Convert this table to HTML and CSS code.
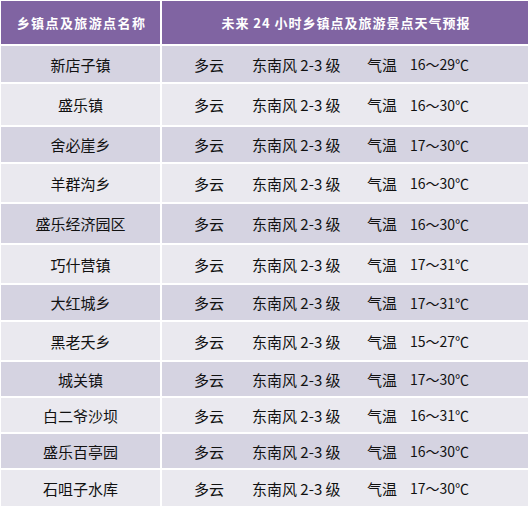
FILE: index.html
```html
<!DOCTYPE html>
<html lang="zh">
<head>
<meta charset="utf-8">
<link rel="stylesheet" href="styles.css">
</head>
<body>
<div class="table">
  <div class="row head">
    <div class="c1">乡镇点及旅游点名称</div>
    <div class="c2">未来 24 小时乡镇点及旅游景点天气预报</div>
  </div>
  <div class="row"><div class="c1">新店子镇</div><div class="c2 data"><span>多云</span><span>东南风 2-3 级</span><span>气温</span><span>16～29℃</span></div></div>
  <div class="row"><div class="c1">盛乐镇</div><div class="c2 data"><span>多云</span><span>东南风 2-3 级</span><span>气温</span><span>16～30℃</span></div></div>
  <div class="row"><div class="c1">舍必崖乡</div><div class="c2 data"><span>多云</span><span>东南风 2-3 级</span><span>气温</span><span>17～30℃</span></div></div>
  <div class="row"><div class="c1">羊群沟乡</div><div class="c2 data"><span>多云</span><span>东南风 2-3 级</span><span>气温</span><span>16～30℃</span></div></div>
  <div class="row"><div class="c1">盛乐经济园区</div><div class="c2 data"><span>多云</span><span>东南风 2-3 级</span><span>气温</span><span>16～30℃</span></div></div>
  <div class="row"><div class="c1">巧什营镇</div><div class="c2 data"><span>多云</span><span>东南风 2-3 级</span><span>气温</span><span>17～31℃</span></div></div>
  <div class="row"><div class="c1">大红城乡</div><div class="c2 data"><span>多云</span><span>东南风 2-3 级</span><span>气温</span><span>17～31℃</span></div></div>
  <div class="row"><div class="c1">黑老夭乡</div><div class="c2 data"><span>多云</span><span>东南风 2-3 级</span><span>气温</span><span>15～27℃</span></div></div>
  <div class="row"><div class="c1">城关镇</div><div class="c2 data"><span>多云</span><span>东南风 2-3 级</span><span>气温</span><span>17～30℃</span></div></div>
  <div class="row"><div class="c1">白二爷沙坝</div><div class="c2 data"><span>多云</span><span>东南风 2-3 级</span><span>气温</span><span>16～31℃</span></div></div>
  <div class="row"><div class="c1">盛乐百亭园</div><div class="c2 data"><span>多云</span><span>东南风 2-3 级</span><span>气温</span><span>16～30℃</span></div></div>
  <div class="row"><div class="c1">石咀子水库</div><div class="c2 data"><span>多云</span><span>东南风 2-3 级</span><span>气温</span><span>17～30℃</span></div></div>
</div>
</body>
</html>
```

FILE: styles.css
```css
html, body {
  margin: 0;
  padding: 0;
  background: #ffffff;
}
body {
  width: 530px;
  height: 508px;
  overflow: hidden;
  font-family: "Noto Sans CJK SC", "Noto Sans", sans-serif;
  color: #111111;
}
.table {
  padding: 1px 2px 0 1px;
  display: flex;
  flex-direction: column;
  gap: 2px;
}
.row {
  display: grid;
  grid-template-columns: 159px 366px;
  column-gap: 2px;
  height: 36px;
}
.row > div {
  display: flex;
  align-items: center;
}
.c1 {
  justify-content: center;
  font-size: 15px;
}
.row:nth-child(even) > div { background: #d5d3e1; }
.row:nth-child(odd) > div { background: #eae9ef; }
.row.head { height: 43px; }
.row.head > div {
  background: #8064a2;
  color: #ffffff;
  font-weight: bold;
  font-size: 13px;
  letter-spacing: 1.4px;
  justify-content: center;
}
.row.head .c1 { padding-left: 2px; }
.row.head .c2 { letter-spacing: 1px; padding-left: 2px; }
.data {
  display: grid !important;
  grid-template-columns: 58px 115px 43px auto;
  padding-left: 32px;
  font-size: 15px;
  white-space: nowrap;
}
.data span:last-child { font-size: 14px; }

.row:nth-child(2) { height: 36px; }
.row:nth-child(3) { height: 41px; }
.row:nth-child(4) { height: 35px; }
.row:nth-child(5) { height: 38px; }
.row:nth-child(6) { height: 39px; }
.row:nth-child(7) { height: 38px; }
.row:nth-child(8) { height: 35px; }
.row:nth-child(9) { height: 38px; }
.row:nth-child(10) { height: 34px; }
.row:nth-child(11) { height: 34px; }
.row:nth-child(12) { height: 34px; }
.row:nth-child(13) { height: 36px; }
```
